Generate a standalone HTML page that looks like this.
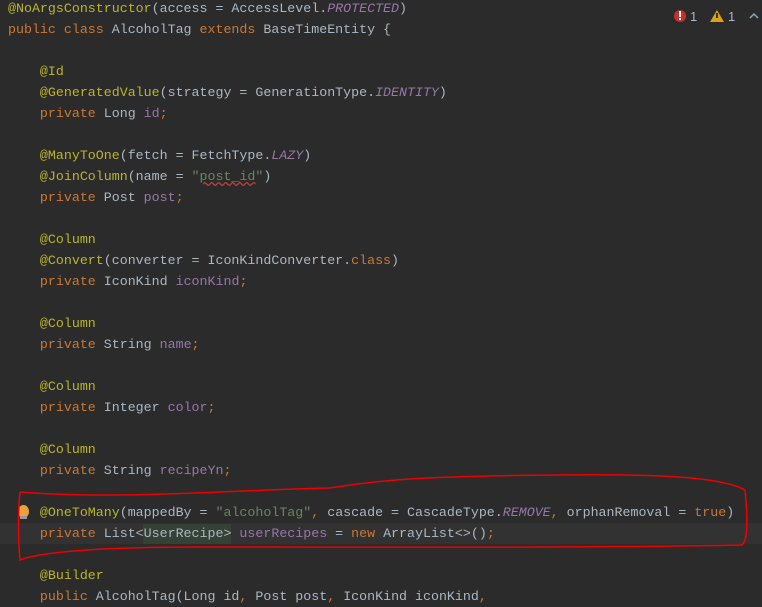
<!DOCTYPE html>
<html><head><style>
body{margin:0;width:762px;height:594px;overflow:hidden;background:#2b2b2b;position:relative}
.c{position:absolute;left:8px;top:-2px;font-family:"Liberation Mono",monospace;font-size:13.3px;line-height:21px;color:#a9b7c6;white-space:pre}
.k{color:#cc7832}.a{color:#bbb529}.f{color:#9876aa}.i{color:#9876aa;font-style:italic}.s{color:#6a8759}
.cur{position:absolute;left:0;top:523px;width:762px;height:21px;background:#323232}
</style></head><body>
<div class="cur"></div>
<div style="position:absolute;left:143px;top:524px;width:88px;height:20px;background:#344134"></div>
<div class="c"><span class="a">@NoArgsConstructor</span>(access = AccessLevel.<span class="i">PROTECTED</span>)
<span class="k">public class </span>AlcoholTag <span class="k">extends </span>BaseTimeEntity {

    <span class="a">@Id</span>
    <span class="a">@GeneratedValue</span>(strategy = GenerationType.<span class="i">IDENTITY</span>)
    <span class="k">private </span>Long <span class="f">id</span><span class="k">;</span>

    <span class="a">@ManyToOne</span>(fetch = FetchType.<span class="i">LAZY</span>)
    <span class="a">@JoinColumn</span>(name = <span class="s">"<span style="text-decoration:underline wavy #bc3f3c">post_id</span>"</span>)
    <span class="k">private </span>Post <span class="f">post</span><span class="k">;</span>

    <span class="a">@Column</span>
    <span class="a">@Convert</span>(converter = IconKindConverter.<span class="k">class</span>)
    <span class="k">private </span>IconKind <span class="f">iconKind</span><span class="k">;</span>

    <span class="a">@Column</span>
    <span class="k">private </span>String <span class="f">name</span><span class="k">;</span>

    <span class="a">@Column</span>
    <span class="k">private </span>Integer <span class="f">color</span><span class="k">;</span>

    <span class="a">@Column</span>
    <span class="k">private </span>String <span class="f">recipeYn</span><span class="k">;</span>

    <span class="a">@OneToMany</span>(mappedBy = <span class="s">"alcoholTag"</span><span class="k">, </span>cascade = CascadeType.<span class="i">REMOVE</span><span class="k">, </span>orphanRemoval = <span class="k">true</span>)
    <span class="k">private </span>List&lt;UserRecipe&gt; <span class="f">userRecipes</span> = <span class="k">new </span>ArrayList&lt;&gt;()<span class="k">;</span>

    <span class="a">@Builder</span>
    <span class="k">public </span>AlcoholTag(Long id<span class="k">, </span>Post post<span class="k">, </span>IconKind iconKind<span class="k">,</span></div>
<div style="position:absolute;left:18px;top:505px;width:11px;height:13px;border-radius:50%;background:#e8a33d"></div>
<div style="position:absolute;left:20px;top:516px;width:7px;height:3px;background:#999"></div>
<svg width="762" height="594" style="position:absolute;left:0;top:0">
<path d="M20 492 C120 500 230 490 330 488 C380 480 420 476 560 475 C650 474 720 476 745 490 C748 520 748 540 742 545 C600 548 400 547 200 547 C100 547 40 552 20 560 C18 540 18 510 20 492" fill="none" stroke="#e00" stroke-width="1.5"/>
<circle cx="680" cy="16" r="6" fill="#c4302b"/><rect x="679" y="11" width="2" height="6" fill="#fff"/><rect x="679" y="18" width="2" height="2" fill="#fff"/>
<text x="690" y="21" fill="#a9b7c6" font-family="Liberation Sans" font-size="13">1</text>
<path d="M717 10 L724 22 L710 22 Z" fill="#d9a11e"/><rect x="716" y="13" width="2" height="5" fill="#333"/>
<text x="728" y="21" fill="#a9b7c6" font-family="Liberation Sans" font-size="13">1</text>
<path d="M750 18 L754 14 L758 18" fill="none" stroke="#8ab" stroke-width="1.5"/>
</svg>
</body></html>
